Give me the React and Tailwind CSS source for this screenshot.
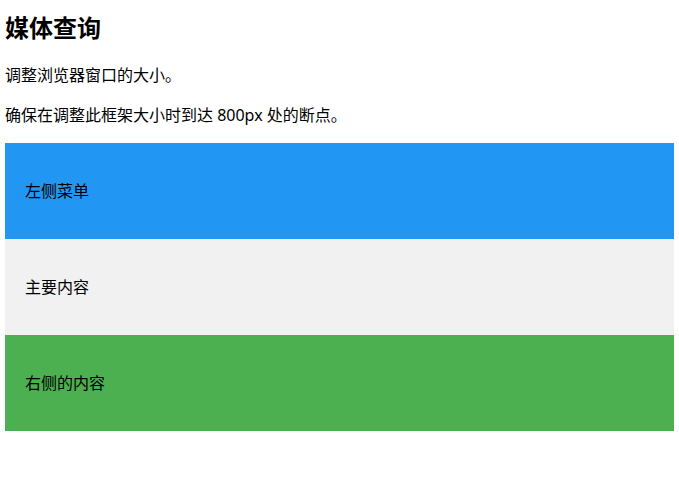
import React from "react";

const blocks = [
  { label: "左侧菜单", className: "bg-[#2196F3]" },
  { label: "主要内容", className: "bg-[#f1f1f1]" },
  { label: "右侧的内容", className: "bg-[#4CAF50]" },
];

const App = () => {
  return (
    <div
      className="min-h-screen bg-white p-[5px] text-black"
      style={{ fontFamily: '"Noto Sans", "Noto Sans CJK SC", sans-serif' }}
    >
      <h1 className="mt-[5px] mb-[19px] text-[24px] leading-[35px] font-bold">媒体查询</h1>
      <p className="mb-[17px] text-[16px] leading-[23px]">调整浏览器窗口的大小。</p>
      <p className="mb-[16px] text-[16px] leading-[23px]">确保在调整此框架大小时到达 800px 处的断点。</p>

      <div className="flex flex-col">
        {blocks.map((b) => (
          <div key={b.label} className={`flex h-[96px] items-center px-5 text-[16px] ${b.className}`}>
            {b.label}
          </div>
        ))}
      </div>
    </div>
  );
};

export default App;
